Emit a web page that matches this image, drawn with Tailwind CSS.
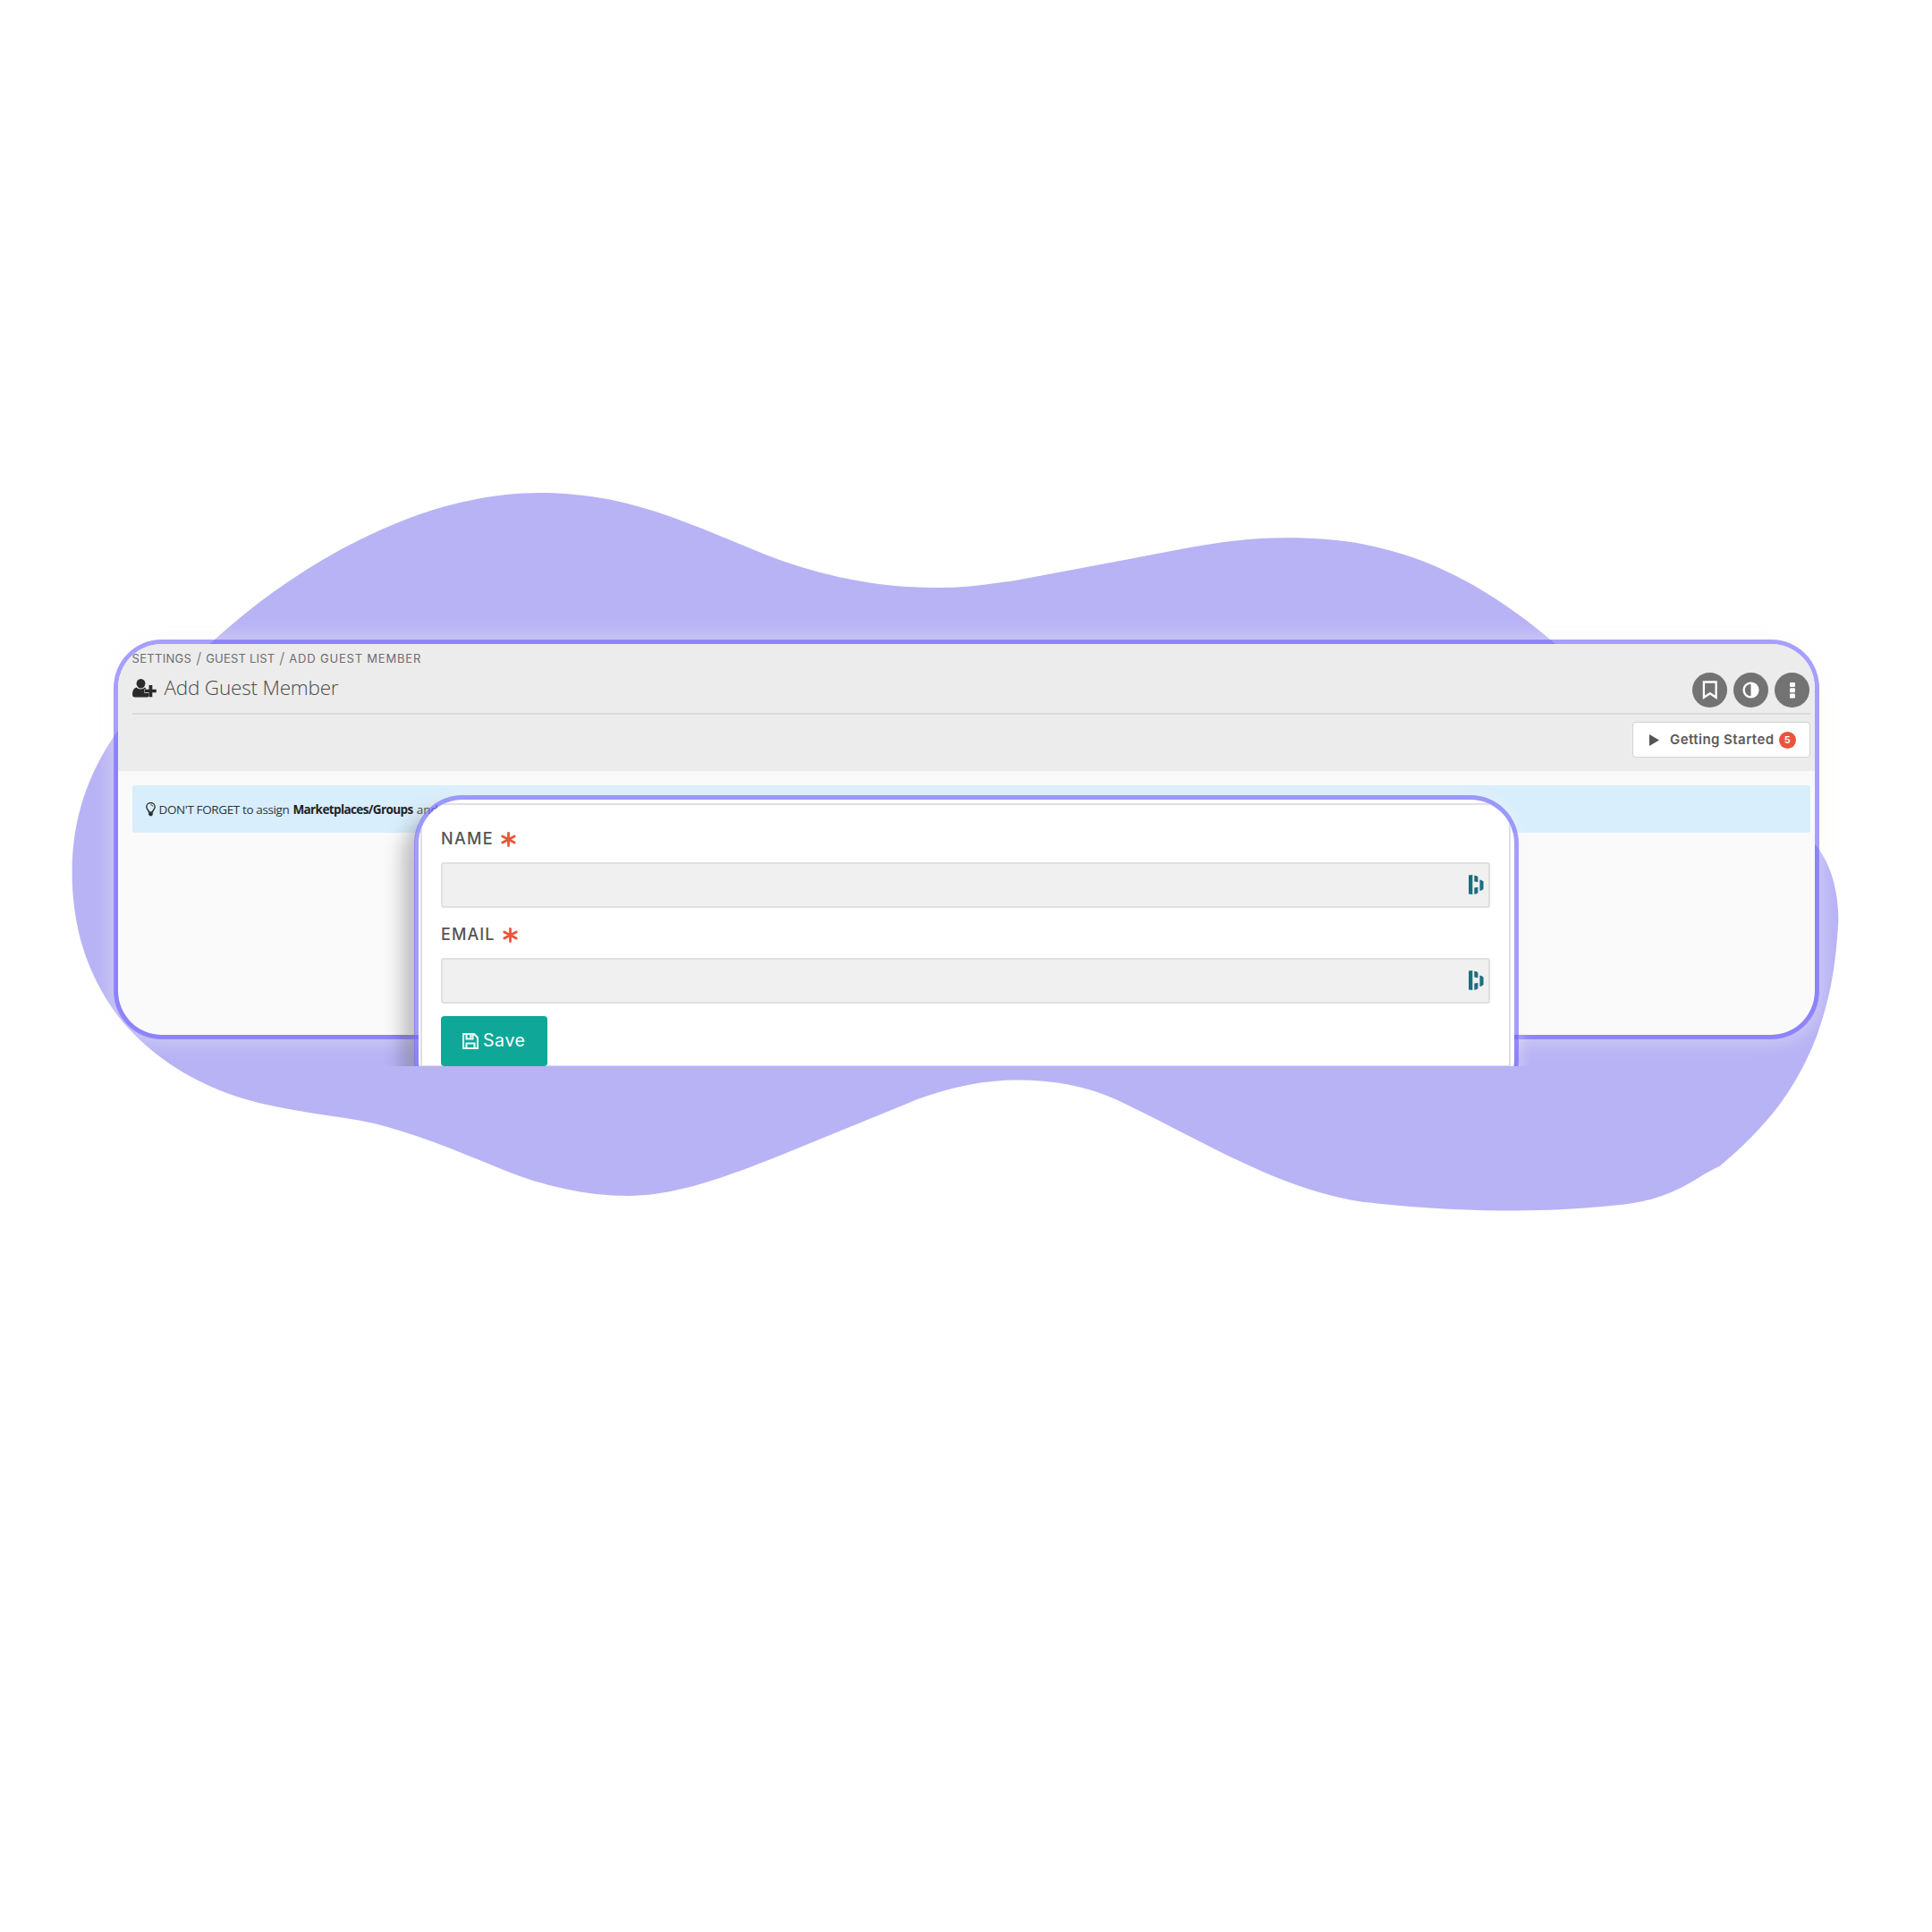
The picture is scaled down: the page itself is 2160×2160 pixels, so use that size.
<!DOCTYPE html>
<html lang="en">
<head>
<meta charset="utf-8">
<title>Add Guest Member</title>
<script src="https://cdn.jsdelivr.net/npm/@tailwindcss/browser@4"></script>
</head>
<body class="bg-white">
<main class="relative h-[2160px] w-[2160px] overflow-hidden bg-white font-['Inter',sans-serif]">
  <svg class="absolute inset-0 h-full w-full" viewBox="0 0 1568 1568" fill="#b8b3f5">
    <path d="M169 524C205 490 248 460 289 439.500C322 423 352 412 380 406.500C418 398 455 398 495 405.500C535 413.500 575 431 615 447.500C655 464 705 477 760 477C785 477 800 474.500 825 471L965 444.500C990 440 1015 436.500 1045 436.500C1075 436.500 1100 439 1129 447C1175 459.500 1219 485 1264 524L1474 686C1486 702 1492 722 1492 747C1490 785 1485 812 1474 842C1457 885 1434 914 1396 946.300C1391 949 1387 950.500 1380 955C1353 972 1334 976 1313 978C1285 981 1255 982.500 1220 982.500C1180 982.500 1140 979.500 1106 975.500C1035 965 970 922 905 892C880 881 855 876.500 825 876.500C800 876.500 772 882 745 892L635 937C595 953 550 970.500 510 970.500C475 970.500 440 962 410 950C375 936 330 916 290 909C260 904 240 902 210 895C165 884 128 862 100 830C72 795 58.500 755 58.500 708C58.500 665 71 628 95 594Z"/>
  </svg>

  <section class="absolute left-[127px] top-[715px] h-[447px] w-[1907px] overflow-hidden rounded-[54px] border-[5px] border-[#7367ff]/63 bg-[#fafafa] bg-clip-padding shadow-[0_0_20px_4px_rgba(250,246,244,0.36)]">
    <header class="h-[142px] bg-[#ececec] pl-[15.500px] pr-[5px]">
      <nav class="flex h-8 items-center text-[13px] leading-8 text-[#6c6c6c]">
        <span class="tracking-[0.300px]">SETTINGS</span>
        <span class="w-[16px] text-center text-[17px] font-light">/</span>
        <span class="tracking-[0.200px]">GUEST LIST</span>
        <span class="w-[16px] text-center text-[17px] font-light">/</span>
        <span class="tracking-[0.800px]">ADD GUEST MEMBER</span>
      </nav>
      <div class="flex h-[46.500px] items-start justify-between border-b-2 border-[#d9d9d9]">
        <div class="flex h-[34px] items-center gap-[9px]">
          <svg class="h-[21px] w-[27px]" viewBox="0 0 27 21" fill="#2b2b2b">
            <ellipse cx="9.500" cy="5.300" rx="4.900" ry="5.300"/>
            <path d="M4.500 9.500C1.500 10.500 0 13 0 17.500C0 19.500 1 20.500 3 20.500H16.500C18 20.500 18.500 19.500 18.500 18V16H13.500V11.500H15.500C15 10.400 14.500 9.800 14 9.500C11.500 12 7 12 4.500 9.500Z"/>
            <path d="M18.500 7h3.800v4.700h4.500v3.600h-4.500v5h-3.800v-5h-4.500v-3.600h4.500z"/>
          </svg>
          <h1 class="font-['Open_Sans',sans-serif] text-[22.500px] font-light tracking-[-0.200px] text-[#4a4a4a]">Add Guest Member</h1>
        </div>
        <div class="flex gap-[7px] pr-px">
          <span class="flex size-[39px] items-center justify-center rounded-full bg-[#737373]">
            <svg class="h-[21px] w-[18px]" viewBox="0 0 18 21" fill="none" stroke="#fff" stroke-width="2.300"><path d="M1.900 1.500h13.700v17.300l-6.800-4.600-6.900 4.600z"/></svg>
          </span>
          <span class="flex size-[39px] items-center justify-center rounded-full bg-[#737373]">
            <svg class="size-[19px]" viewBox="0 0 19 19"><circle cx="9.500" cy="9.500" r="7.900" fill="none" stroke="#fff" stroke-width="2.400"/><path d="M9.500 1.500a8 8 0 0 1 0 16z" fill="#fff"/></svg>
          </span>
          <span class="flex size-[39px] items-center justify-center rounded-full bg-[#737373]">
            <svg class="h-[18px] w-[6px]" viewBox="0 0 6 18" fill="#fff"><rect width="6" height="5" rx="1.200"/><rect y="6.300" width="6" height="5" rx="1.200"/><rect y="12.600" width="6" height="5" rx="1.200"/></svg>
          </span>
        </div>
      </div>
      <div class="flex justify-end pt-[8.500px]">
        <button class="flex h-10 w-[199px] items-center rounded-[4px] border border-[#d2d2d2] bg-white pl-[18px]">
          <svg class="mr-[12px] h-[13px] w-[11px]" viewBox="0 0 11 13" fill="#555"><path d="M0 0l11 6.500L0 13z"/></svg>
          <span class="pt-px text-[15px] font-semibold tracking-[0.450px] text-[#5a5a5a]">Getting Started</span>
          <span class="ml-[5px] flex size-[19px] items-center justify-center rounded-full bg-[#e9553b] text-[11px] font-semibold text-white">5</span>
        </button>
      </div>
    </header>
    <div class="pl-[15.500px] pr-[5px] pt-4">
      <div class="flex h-[53px] items-center whitespace-pre rounded-[3px] bg-[#d8eefc] pl-[15px] font-['Open_Sans',sans-serif] text-[13.500px] text-[#333]">
        <svg class="mr-[4px] h-[16px] w-[11px]" viewBox="0 0 11 16" fill="none" stroke="#2b2b2b" stroke-width="1.400"><path d="M3.500 11C3.500 9 .8 7.800 .8 5A4.700 4.400 0 0 1 10.200 5C10.200 7.800 7.500 9 7.500 11z"/><path d="M3.200 11.500h4.600v2.300l-1.200 1.400H4.400l-1.200-1.400z" fill="#2b2b2b" stroke="none"/><path d="M5.500 2.800c1.300 0 2.200.8 2.300 1.800" stroke-width="1"/></svg>
        <span class="pt-px tracking-[-0.380px]">DON'T FORGET to assign</span>
        <span class="ml-[4px] pt-px font-bold tracking-[-0.600px] text-[#222]">Marketplaces/Groups</span>
        <span class="ml-[4px] pt-px">and</span>
      </div>
    </div>
  </section>

  <div class="absolute left-0 top-0 h-[1192px] w-full overflow-hidden">
    <section class="absolute left-[463px] top-[889px] h-[350px] w-[1235px] overflow-hidden rounded-[54px] border-[5px] border-[#7367ff]/63 bg-white bg-clip-padding shadow-[-16px_14px_22px_-4px_rgba(0,0,0,0.26),0_0_14px_3px_rgba(250,246,244,0.36)]">
      <form class="ml-[2px] mr-[4px] mt-1 h-[295px] border-2 border-[#dfdfdf] px-[21px] pt-[26px]">
        <label class="mb-[14px] flex h-6 items-center gap-[8px] text-[18px] font-medium text-[#555]">
          <span class="pb-px tracking-[1.300px]">NAME</span>
          <svg class="size-[17px]" viewBox="0 0 17 17" stroke="#e9553b" stroke-width="2.800" stroke-linecap="round"><path d="M8.500 1.400v14.200M1.800 5l13.400 7M15.200 5l-13.400 7"/></svg>
        </label>
        <div class="flex h-[51px] items-center justify-end rounded-[3px] border-2 border-[#e0e0e0] bg-[#f0f0f0] pr-[5px]">
          <svg class="mb-[2px] h-[22px] w-[17px]" viewBox="0 0 17 22" fill="#1f6c7e"><path d="M0 .4L4.300 0V22L0 21.600zM6.300 .8L9 1.200 10.400 2.600V8.200L6.300 7.400zM6.300 14.600L10.400 13.800V20L9 21.300 6.300 21.700zM12.400 5.600L14.200 6 16.500 7.500V16L14.200 17.600 12.400 18z"/></svg>
        </div>
        <label class="mb-[14px] mt-[18px] flex h-6 items-center gap-[8px] text-[18px] font-medium text-[#555]">
          <span class="pb-px tracking-[1.100px]">EMAIL</span>
          <svg class="size-[17px]" viewBox="0 0 17 17" stroke="#e9553b" stroke-width="2.800" stroke-linecap="round"><path d="M8.500 1.400v14.200M1.800 5l13.400 7M15.200 5l-13.400 7"/></svg>
        </label>
        <div class="flex h-[51px] items-center justify-end rounded-[3px] border-2 border-[#e0e0e0] bg-[#f0f0f0] pr-[5px]">
          <svg class="mb-[2px] h-[22px] w-[17px]" viewBox="0 0 17 22" fill="#1f6c7e"><path d="M0 .4L4.300 0V22L0 21.600zM6.300 .8L9 1.200 10.400 2.600V8.200L6.300 7.400zM6.300 14.600L10.400 13.800V20L9 21.300 6.300 21.700zM12.400 5.600L14.200 6 16.500 7.500V16L14.200 17.600 12.400 18z"/></svg>
        </div>
        <button class="mt-[14px] flex h-[56px] w-[119px] items-center rounded-[4px] bg-[#0fa898] pl-6 text-white">
          <svg class="mr-[5px] size-[18px]" viewBox="0 0 18 18" fill="none" stroke="#e8f7f5" stroke-width="2.100"><path d="M1 1h12l4 4v12H1zM4.500 17v-5.500h9V17M4.500 1v5.500h7V1"/><path d="M9.200 2v3.500"/></svg>
          <span class="text-[19.500px] tracking-[0.600px]">Save</span>
        </button>
      </form>
    </section>
  </div>
</main>
</body>
</html>
